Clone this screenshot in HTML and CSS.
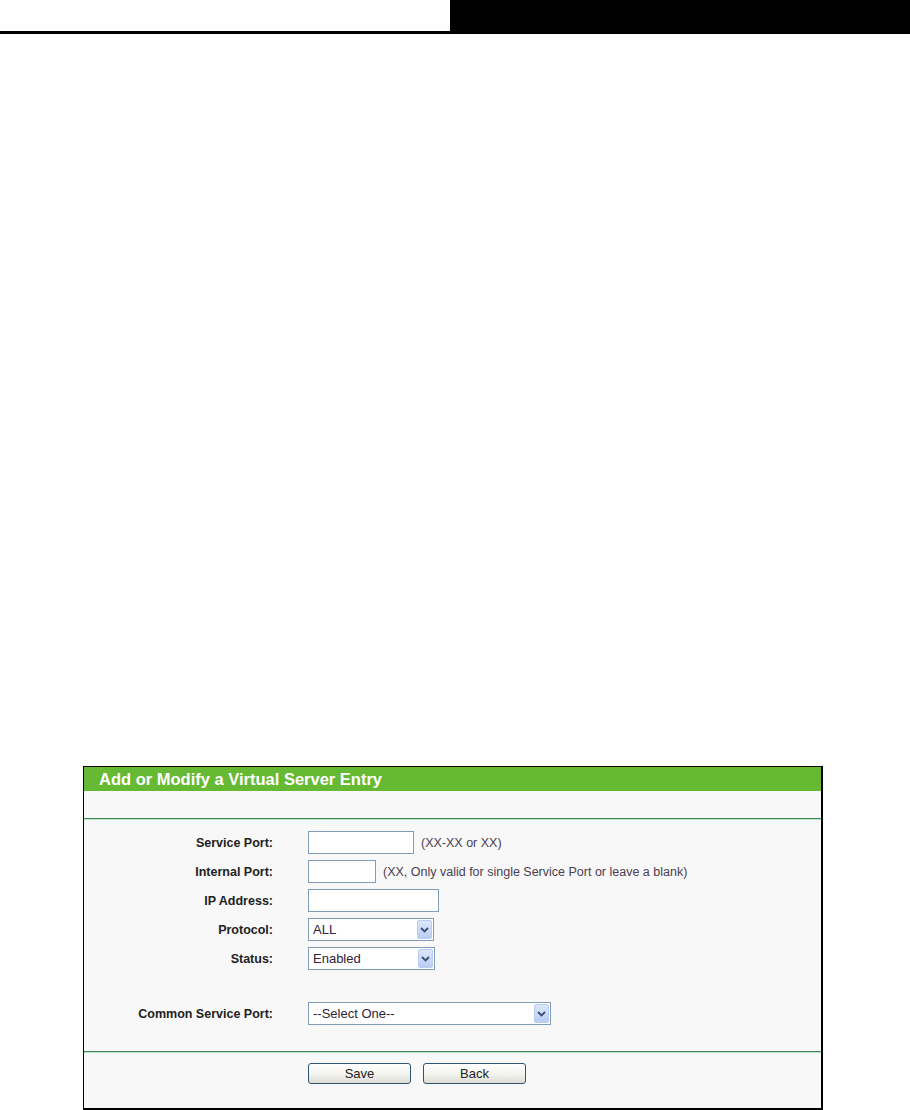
FILE: index.html
```html
<!DOCTYPE html>
<html lang="en">
<head>
    <meta charset="UTF-8">
    <title>Add or Modify a Virtual Server Entry</title>
    <link rel="stylesheet" href="styles.css">
</head>
<body>
    <div class="top-bar">
        <div class="top-left"></div>
        <div class="top-right"></div>
    </div>
    <div class="page">
        <div class="panel">
            <div class="panel-title">Add or Modify a Virtual Server Entry</div>
            <div class="panel-blank"></div>
            <div class="form">
                <label class="field-label">Service Port:</label>
                <div class="field">
                    <input type="text" class="text-input w-service">
                    <span class="hint">(XX-XX or XX)</span>
                </div>

                <label class="field-label">Internal Port:</label>
                <div class="field">
                    <input type="text" class="text-input w-internal">
                    <span class="hint">(XX, Only valid for single Service Port or leave a blank)</span>
                </div>

                <label class="field-label">IP Address:</label>
                <div class="field">
                    <input type="text" class="text-input w-ip">
                </div>

                <label class="field-label">Protocol:</label>
                <div class="field">
                    <div class="select-box w-protocol">
                        <select><option>ALL</option><option>TCP</option><option>UDP</option></select>
                        <span class="arrow"><svg width="9" height="6" viewBox="0 0 9 6"><path d="M1 1 L4.5 4.5 L8 1" fill="none" stroke="#3b4d72" stroke-width="1.8"/></svg></span>
                    </div>
                </div>

                <label class="field-label">Status:</label>
                <div class="field">
                    <div class="select-box w-status">
                        <select><option>Enabled</option><option>Disabled</option></select>
                        <span class="arrow"><svg width="9" height="6" viewBox="0 0 9 6"><path d="M1 1 L4.5 4.5 L8 1" fill="none" stroke="#3b4d72" stroke-width="1.8"/></svg></span>
                    </div>
                </div>

                <div class="spacer"></div>

                <label class="field-label">Common Service Port:</label>
                <div class="field">
                    <div class="select-box w-common">
                        <select><option>--Select One--</option><option>DNS</option><option>FTP</option><option>HTTP</option></select>
                        <span class="arrow"><svg width="9" height="6" viewBox="0 0 9 6"><path d="M1 1 L4.5 4.5 L8 1" fill="none" stroke="#3b4d72" stroke-width="1.8"/></svg></span>
                    </div>
                </div>
            </div>
            <div class="button-row">
                <button type="button" class="btn">Save</button>
                <button type="button" class="btn">Back</button>
            </div>
        </div>
    </div>
</body>
</html>
```

FILE: styles.css
```css
html, body {
    margin: 0;
    padding: 0;
    background: #fff;
    overflow: hidden;
}
body {
    font-family: "Liberation Sans", Arial, sans-serif;
    color: #333;
}
.top-bar {
    display: flex;
    height: 34px;
}
.top-left {
    flex: 0 0 450px;
    box-sizing: border-box;
    border-bottom: 3px solid #000;
}
.top-right {
    flex: 1;
    background: #000;
}
.page {
    padding: 732px 0 0 83px;
}
.panel {
    width: 740px;
    box-sizing: border-box;
    border-style: solid;
    border-color: #000;
    border-width: 1px 2px 2px 1px;
    background: #f8f8f8;
}
.panel-title {
    height: 24px;
    line-height: 24px;
    background: #66b933;
    color: #fff;
    font-size: 16.5px;
    font-weight: bold;
    padding-left: 15px;
}
.panel-blank {
    height: 27px;
    border-bottom: 1px solid #3c8a5a;
    box-shadow: 0 1px 0 #c2dfcc;
}
.form {
    display: grid;
    grid-template-columns: 189px 1fr;
    grid-template-rows: repeat(5, 29px) 26px 29px;
    column-gap: 35px;
    align-items: center;
    padding: 8px 0 23px;
    margin-top: 1px;
    border-bottom: 1px solid #3c8a5a;
    box-shadow: 0 1px 0 #c2dfcc;
}
.field-label {
    text-align: right;
    font-size: 12.5px;
    font-weight: bold;
    color: #222;
}
.field {
    display: flex;
    align-items: center;
}
.spacer {
    grid-column: 1 / 3;
}
.text-input {
    box-sizing: border-box;
    height: 23px;
    border: 1px solid #7f9db9;
    background: #fff;
    margin: 0;
    padding: 0 3px;
}
.w-service { width: 106px; }
.w-internal { width: 68px; }
.w-ip { width: 131px; }
.w-protocol { width: 126px; }
.w-status { width: 127px; }
.w-common { width: 243px; }
.hint {
    margin-left: 7px;
    font-size: 12.5px;
    color: #4a4050;
}
.select-box {
    display: flex;
    align-items: center;
    box-sizing: border-box;
    height: 23px;
    border: 1px solid #7f9db9;
    background: #fff;
    padding-right: 1px;
}
.select-box select {
    flex: 1;
    min-width: 0;
    appearance: none;
    -webkit-appearance: none;
    border: none;
    background: transparent;
    outline: none;
    font-family: "Liberation Sans", Arial, sans-serif;
    font-size: 13px;
    color: #2e2438;
    padding: 0 0 0 4px;
    margin: 0;
    height: 21px;
}
.arrow {
    display: flex;
    align-items: center;
    justify-content: center;
    width: 15px;
    height: 19px;
    box-sizing: border-box;
    border: 1px solid #b9ccef;
    border-radius: 2px;
    background: linear-gradient(#dde7fb, #b8cdf3);
}
.button-row {
    display: flex;
    gap: 12px;
    padding: 10px 0 0 224px;
    height: 55px;
    box-sizing: border-box;
    margin-top: 1px;
}
.btn {
    width: 103px;
    height: 21px;
    box-sizing: border-box;
    border: 1px solid #2f5474;
    border-radius: 3px;
    background: linear-gradient(#ffffff, #f1f1ec 60%, #dcdcd4);
    font-family: "Liberation Sans", Arial, sans-serif;
    font-size: 13px;
    color: #222;
    padding: 0;
    cursor: pointer;
}
```
